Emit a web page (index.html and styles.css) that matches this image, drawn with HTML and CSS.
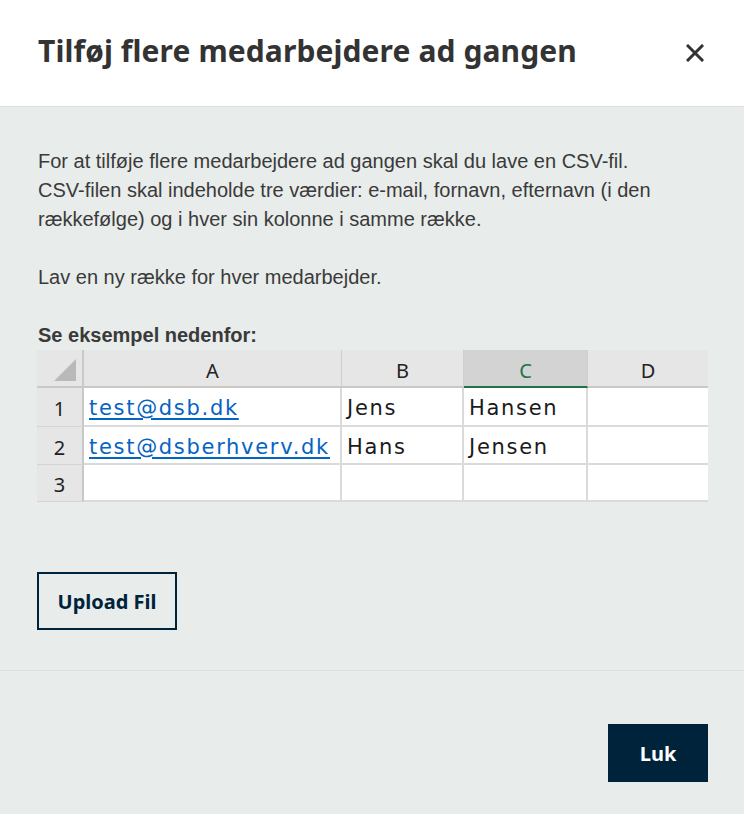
FILE: index.html
```html
<!DOCTYPE html>
<html lang="da">
<head>
    <meta charset="UTF-8">
    <meta name="viewport" content="width=device-width, initial-scale=1.0">
    <title>Tilføj flere medarbejdere</title>
    <link rel="stylesheet" href="styles.css">
</head>
<body>
    <div class="modal">
        <div class="modal-header">
            <h2 class="modal-title">Tilføj flere medarbejdere ad gangen</h2>
            <button class="close-btn" aria-label="Luk">
                <svg width="18" height="18" viewBox="0 0 18 18">
                    <path d="M2 2 L16 16 M16 2 L2 16" stroke="#333" stroke-width="3" stroke-linecap="square"/>
                </svg>
            </button>
        </div>

        <div class="modal-body">
            <p>For at tilføje flere medarbejdere ad gangen skal du lave en CSV-fil.<br>
            CSV-filen skal indeholde tre værdier: e-mail, fornavn, efternavn (i den rækkefølge) og i hver sin kolonne i samme række.</p>
            <p>Lav en ny række for hver medarbejder.</p>
            <p class="example-label">Se eksempel nedenfor:</p>

            <div class="sheet">
                <div class="corner"><span class="corner-tri"></span></div>
                <div class="col-head">A</div>
                <div class="col-head">B</div>
                <div class="col-head selected">C</div>
                <div class="col-head last">D</div>

                <div class="row-head">1</div>
                <div class="cell"><span class="link">test@dsb.dk</span></div>
                <div class="cell">Jens</div>
                <div class="cell">Hansen</div>
                <div class="cell"></div>

                <div class="row-head">2</div>
                <div class="cell"><span class="link">test@dsberhverv.dk</span></div>
                <div class="cell">Hans</div>
                <div class="cell">Jensen</div>
                <div class="cell"></div>

                <div class="row-head">3</div>
                <div class="cell"></div>
                <div class="cell"></div>
                <div class="cell"></div>
                <div class="cell"></div>
            </div>

            <button class="btn-outline">Upload Fil</button>
        </div>

        <div class="modal-footer">
            <button class="btn-primary">Luk</button>
        </div>
    </div>
</body>
</html>
```

FILE: styles.css
```css
* {
    margin: 0;
    padding: 0;
    box-sizing: border-box;
}

body {
    width: 744px;
    min-height: 814px;
    background: #e8ecea;
    font-family: "Liberation Sans", Arial, sans-serif;
    color: #333;
}

.modal-header {
    height: 107px;
    background: #fff;
    border-bottom: 1px solid #dedede;
    display: flex;
    align-items: center;
    justify-content: space-between;
    padding: 0 40px 6px 38px;
}

.modal-title {
    font-family: "Noto Sans", sans-serif;
    font-size: 30px;
    font-weight: 700;
    color: #333;
    letter-spacing: 0.1px;
}

.close-btn {
    background: none;
    border: none;
    width: 18px;
    height: 18px;
    margin-top: 6px;
    cursor: pointer;
}

.close-btn svg {
    display: block;
}

.modal-body {
    padding: 40px 36px 40px 38px;
    border-bottom: 1px solid #e2dede;
}

.modal-body p {
    font-size: 20px;
    line-height: 29px;
    margin-bottom: 29px;
    color: #3a3a3a;
}

.modal-body .example-label {
    font-weight: 700;
    margin-bottom: 0;
}

/* excel-like example */
.sheet {
    display: grid;
    grid-template-columns: 47px 258px 122px 124px 120px;
    grid-template-rows: 38px 39px 38px 37px;
    margin-left: -1px;
    width: 671px;
    background: #fff;
    font-family: "Noto Sans", sans-serif;
    font-size: 20px;
    color: #222;
}

.corner,
.col-head,
.row-head {
    background: #e6e6e6;
    display: flex;
    align-items: center;
    justify-content: center;
    color: #222;
}

.corner {
    border-right: 2px solid #c8c8c8;
    border-bottom: 2px solid #c8c8c8;
    justify-content: flex-end;
    align-items: flex-end;
    padding: 0 6px 5px 0;
}

.corner-tri {
    width: 0;
    height: 0;
    border-left: 22px solid transparent;
    border-bottom: 22px solid #b9b9b9;
}

.col-head {
    border-right: 1px solid #cfcfcf;
    border-bottom: 2px solid #c8c8c8;
    padding-top: 4px;
}

.col-head.last {
    border-right: none;
}

.col-head.selected {
    background: #d3d3d3;
    border-bottom: 2px solid #217346;
    color: #217346;
}

.row-head {
    border-right: 2px solid #c8c8c8;
    border-bottom: 1px solid #d4d4d4;
    padding-top: 3px;
}

.cell {
    border-right: 2px solid #dadada;
    border-bottom: 2px solid #dadada;
    display: flex;
    align-items: center;
    padding: 3px 4px 0 5px;
    white-space: nowrap;
    font-family: "DejaVu Sans", sans-serif;
    font-size: 21px;
    letter-spacing: 1.7px;
    color: #1a1a1a;
}

.cell:nth-child(5n) {
    border-right: none;
}

.link {
    color: #0563c1;
    text-decoration: underline;
    text-underline-offset: 3px;
}

.btn-outline {
    margin-top: 70px;
    margin-left: -1px;
    width: 140px;
    height: 58px;
    background: transparent;
    border: 2px solid #00233c;
    color: #00233c;
    font-family: "Noto Sans", sans-serif;
    font-size: 20px;
    font-weight: 700;
    cursor: pointer;
}

.modal-footer {
    display: flex;
    justify-content: flex-end;
    padding: 53px 36px 30px;
}

.btn-primary {
    width: 100px;
    height: 58px;
    background: #00233c;
    border: none;
    color: #fff;
    font-family: "Noto Sans", sans-serif;
    font-size: 20px;
    font-weight: 700;
    cursor: pointer;
}
```
